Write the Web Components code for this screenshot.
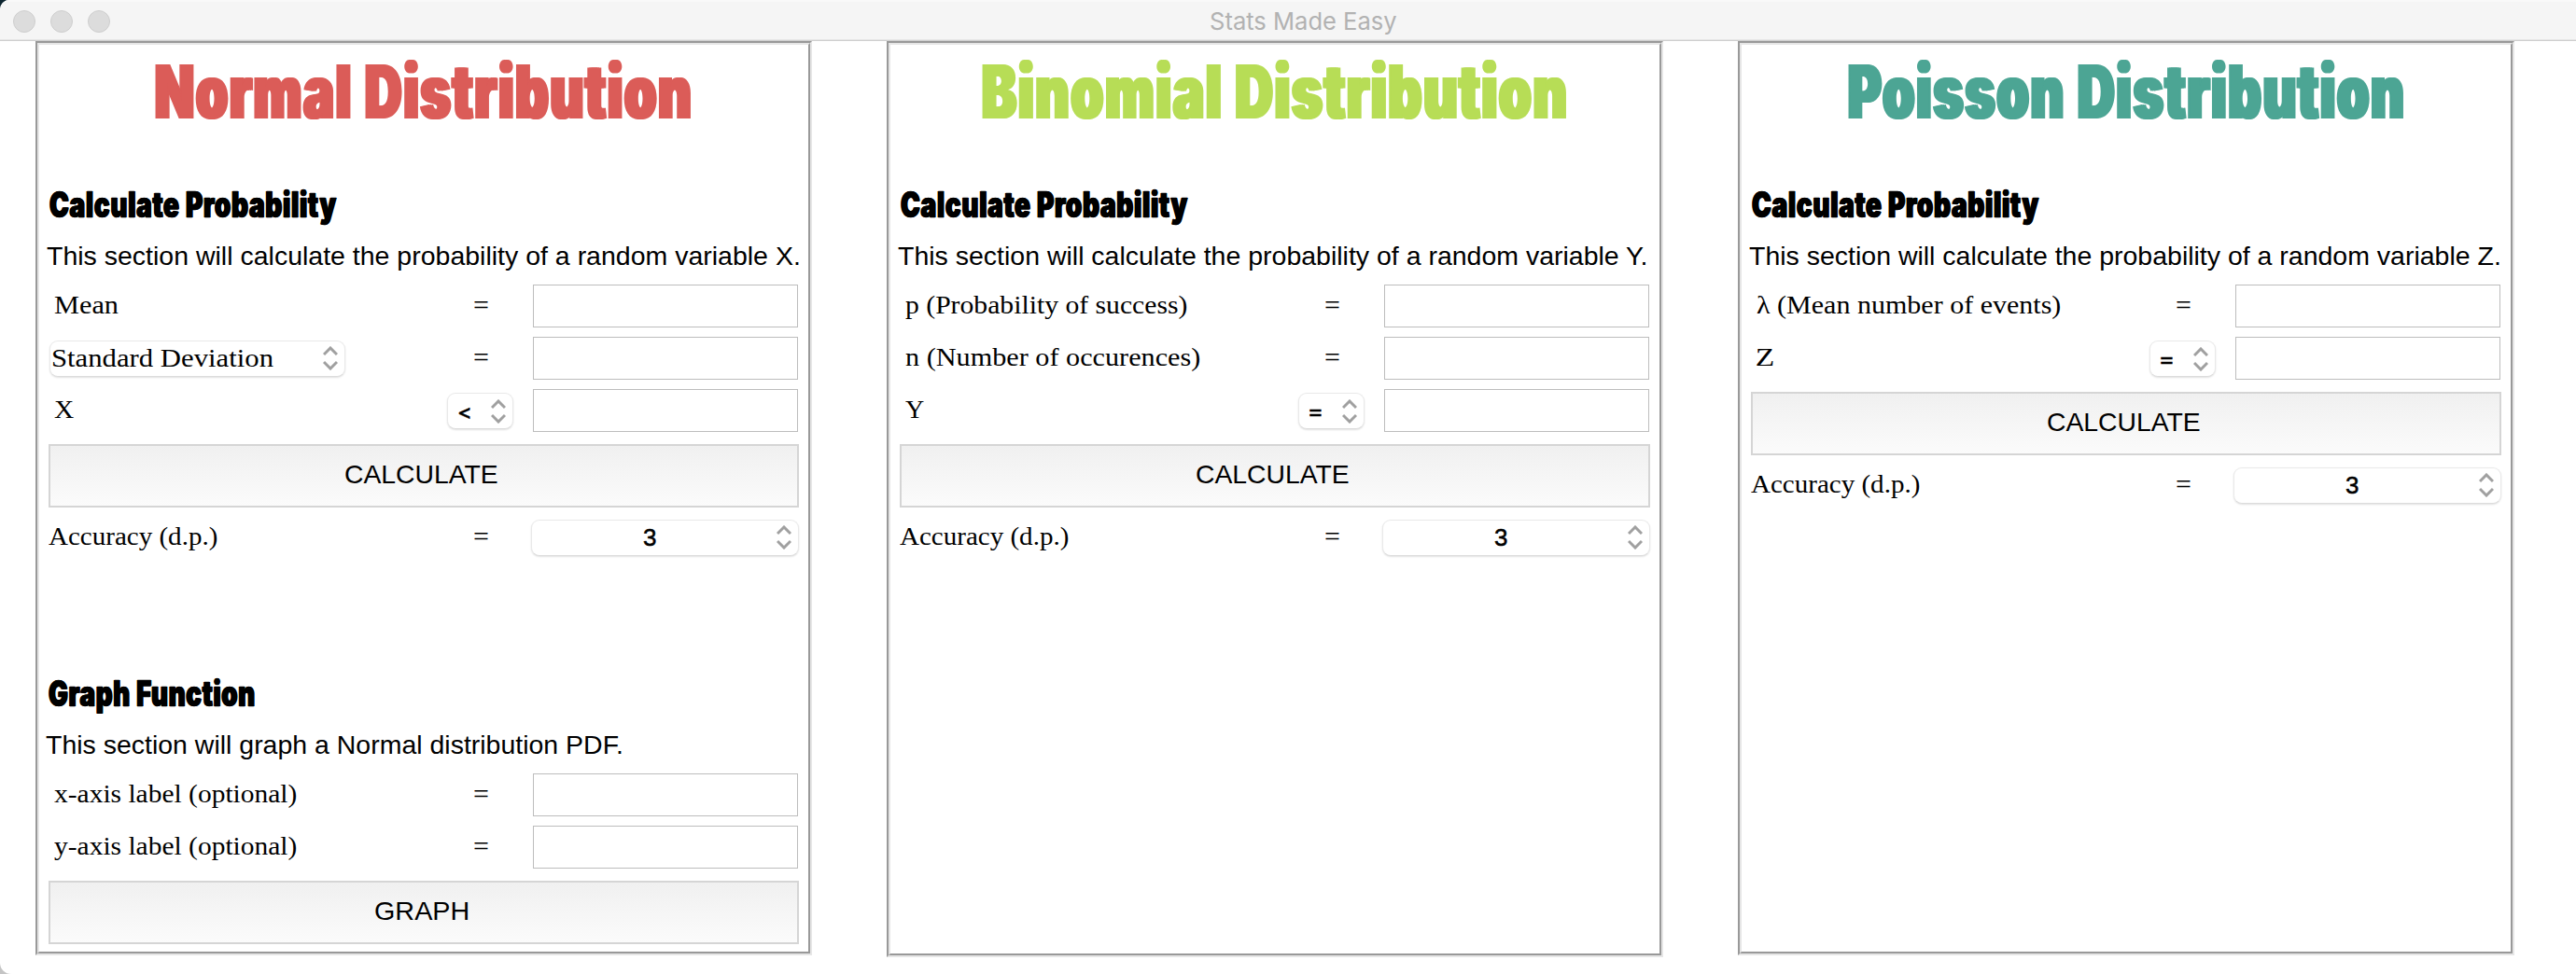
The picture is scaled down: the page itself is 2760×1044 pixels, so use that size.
<!DOCTYPE html>
<html lang="en">
<head>
<meta charset="utf-8">
<title>Stats Made Easy</title>
<style>
html{background:linear-gradient(#0d2530 50%,#c4c4c4 50%)}
body{margin:0;width:2760px;height:1044px;overflow:hidden}
</style>
</head>
<body>
<stats-app></stats-app>
<script>
const define = (name, html, setup) => {
  const t = document.createElement('template');
  t.innerHTML = html;
  customElements.define(name, class extends HTMLElement {
    connectedCallback() {
      if (this.shadowRoot) return;
      this.attachShadow({mode: 'open'}).append(t.content.cloneNode(true));
      if (setup) setup(this, this.shadowRoot);
    }
  });
};

const FACES = {
  sans: ['400', '"Liberation Sans", Arial, sans-serif'],
  medium: ['500', 'Inter, "Liberation Sans", sans-serif'],
  serif: ['400', '"Liberation Serif", serif'],
  heavy: ['900', 'Inter, Impact, sans-serif'],
  ui: ['400', 'Inter, sans-serif']
};
const ctx = document.createElement('canvas').getContext('2d');

/* A line of text whose ink spans exactly the given width. */
define('fit-text', `<style>
  :host{display:block;flex:none;white-space:nowrap}
  span{display:inline-block;transform-origin:0 50%;white-space:pre}
  </style><span><slot></slot></span>`, (el, root) => {
  const [weight, family] = FACES[el.getAttribute('face') || 'serif'];
  const size = +(el.getAttribute('size') || 28);
  const w = +el.getAttribute('w');
  const fat = +(el.getAttribute('fat') || 0);
  const span = root.querySelector('span');
  ctx.font = `${weight} ${size}px ${family}`;
  ctx.letterSpacing = fat + 'px';
  const m = ctx.measureText(el.textContent);
  const left = -m.actualBoundingBoxLeft - fat;
  const s = w / (m.actualBoundingBoxRight + fat - left);
  el.style.width = w + 'px';
  span.style.font = `${weight} ${size}px/${el.getAttribute('line') || 40}px ${family}`;
  span.style.transform = `translateX(${-left * s}px) scaleX(${s})`;
  if (fat) {
    span.style.letterSpacing = fat + 'px';
    span.style.textShadow = `${fat}px 0 currentColor, ${-fat}px 0 currentColor`;
  }
  const stroke = el.getAttribute('stroke');
  if (stroke) span.style.webkitTextStroke = stroke + 'px currentColor';
});

define('title-bar', `<style>
  :host{display:flex;align-items:center;box-sizing:border-box;height:44px;padding:0 14px;
    background:#f5f5f5;border-top:2px solid #f9f9f9;border-bottom:1px solid #cfcfcf;
    box-shadow:inset 0 -1px #e6e6e6;color:#b2b2b2}
  .lights{display:flex;gap:16px;width:1283px}
  i{box-sizing:border-box;width:24px;height:24px;border:1px solid #cecece;border-radius:50%;background:#dcdcdc}
  </style><div class="lights"><i></i><i></i><i></i></div>
  <fit-text face="ui" size="26" w="199">Stats Made Easy</fit-text>`);

define('pop-up', `<style>
  :host{display:flex;align-items:center;justify-content:space-between;box-sizing:border-box;height:39px;
    padding:0 7px 0 3px;border-radius:9px;background:#fff;border:1px solid #e9e9e9;border-bottom-color:#dcdcdc;
    box-shadow:0 1px 2px rgba(0,0,0,.12)}
  svg{display:block;flex:none}
  </style><slot></slot>
  <svg width="16" height="26" viewBox="0 0 16 26" fill="none" stroke="#a0a0a0" stroke-width="3"><path d="M1 9 8 2l7 7M1 17l7 7 7-7"/></svg>`);

define('text-box', `<style>:host{display:block;box-sizing:border-box;width:284px;height:46px;border:1px solid #bdbdbd;background:#fff}</style>`);

define('push-button', `<style>
  :host{display:flex;align-items:center;justify-content:center;box-sizing:border-box;height:68px;margin:8px 0 8px 10px;width:804px;
    border:2px solid #d5d5d5;background:linear-gradient(#f0f0f0,#fbfbfb);padding:0 5px 2px 0}
  </style><slot></slot>`);

define('form-row', `<style>
  :host{display:grid;grid-template-columns:426px 103px 284px;align-items:center;height:56px}
  .label{padding-left:16px;padding-bottom:2px}
  :host([tight]) .label{padding-left:10px}
  :host([control]) .label{padding:0 0 0 11px}
  .op{display:flex;justify-content:flex-start;padding:0 0 3px 40px}
  :host([choice]) .op{padding:1px 0 0 11px}
  </style><div class="label"><slot name="label"></slot></div><div class="op"><slot name="op"></slot></div><slot></slot>`);

define('dist-panel', `<style>
  :host{display:block;box-sizing:border-box;width:832px;height:980px;
    border:2px solid;border-color:#999 #e6e6e6 #e6e6e6 #999;color:#000}
  .inner{box-sizing:border-box;height:100%;border:2px solid;border-color:#e6e6e6 #999 #999 #e6e6e6}
  .title{display:flex;justify-content:center;height:98px;padding-right:2px;color:var(--accent)}
  </style><div class="inner"><div class="title"><slot name="title"></slot></div><slot></slot></div>`);

define('section-head', `<style>
  :host{display:block;height:154px;box-sizing:border-box;padding:48px 0 0 11px}
  ::slotted([slot=note]){margin:11px 0 0 -3px}
  </style><slot></slot><slot name="note"></slot>`);

const EQ = '<fit-text slot="op" size="30" w="15">=</fit-text>';
const pick = (c, w) => `<pop-up slot="op" style="width:71px;padding-left:11px"><fit-text face="medium" size="22" w="13" stroke=".4">${c}</fit-text></pop-up>`;
const label = (t, w) => `<fit-text slot="label" w="${w}">${t}</fit-text>`;
const accuracy = `<form-row tight style="height:48px">${label('Accuracy (d.p.)', 181)}${EQ}
  <pop-up style="width:287px;margin-left:-2px;padding-left:119px"><fit-text face="sans" size="26" w="14" stroke=".5">3</fit-text></pop-up></form-row>`;
const head = (t, w, note, nw, extra = '') => `<section-head style="${extra}"><fit-text face="heavy" size="39" w="${w}" fat="1" stroke=".4" line="50">${t}</fit-text>
  <fit-text slot="note" face="sans" w="${nw}">${note}</fit-text></section-head>`;
const button = (t, w) => `<push-button><fit-text face="sans" w="${w}">${t}</fit-text></push-button>`;
const title = (t, w) => `<fit-text slot="title" face="heavy" size="80" line="99" fat="3" w="${w}">${t}</fit-text>`;

define('stats-app', `<style>
  :host{display:block;box-sizing:border-box;width:2760px;height:1044px;background:#fff;border-radius:10px 0 0 12px;overflow:hidden}
  main{display:flex;gap:80px;padding-left:38px}
  </style>
  <title-bar></title-bar>
  <main>
   <dist-panel style="--accent:#db5c58">${title('Normal Distribution', 574)}
    ${head('Calculate Probability', 308, 'This section will calculate the probability of a random variable X.', 806)}
    <form-row>${label('Mean', 69)}${EQ}<text-box></text-box></form-row>
    <form-row control><pop-up slot="label" style="width:317px;padding-left:2px"><fit-text w="237" line="42">Standard Deviation</fit-text></pop-up>${EQ}<text-box></text-box></form-row>
    <form-row choice>${label('X', 21)}${pick('&lt;')}<text-box></text-box></form-row>
    ${button('CALCULATE', 163)}
    ${accuracy}
    ${head('Graph Function', 221, 'This section will graph a Normal distribution PDF.', 617, 'height:224px;padding:118px 0 0 10px')}
    <form-row>${label('x-axis label (optional)', 260)}${EQ}<text-box></text-box></form-row>
    <form-row>${label('y-axis label (optional)', 260)}${EQ}<text-box></text-box></form-row>
    ${button('GRAPH', 99)}
   </dist-panel>
   <dist-panel style="--accent:#b7dd56;height:982px">${title('Binomial Distribution', 626)}
    ${head('Calculate Probability', 308, 'This section will calculate the probability of a random variable Y.', 802)}
    <form-row>${label('p (Probability of success)', 302)}${EQ}<text-box></text-box></form-row>
    <form-row>${label('n (Number of occurences)', 316)}${EQ}<text-box></text-box></form-row>
    <form-row choice>${label('Y', 20)}${pick('=')}<text-box></text-box></form-row>
    ${button('CALCULATE', 163)}
    ${accuracy}
   </dist-panel>
   <dist-panel style="--accent:#4ca594">${title('Poisson Distribution', 595)}
    ${head('Calculate Probability', 308, 'This section will calculate the probability of a random variable Z.', 804)}
    <form-row>${label('λ (Mean number of events)', 326)}${EQ}<text-box></text-box></form-row>
    <form-row choice>${label('Z', 18)}${pick('=')}<text-box></text-box></form-row>
    ${button('CALCULATE', 163)}
    ${accuracy}
   </dist-panel>
  </main>`);
</script>
</body>
</html>
